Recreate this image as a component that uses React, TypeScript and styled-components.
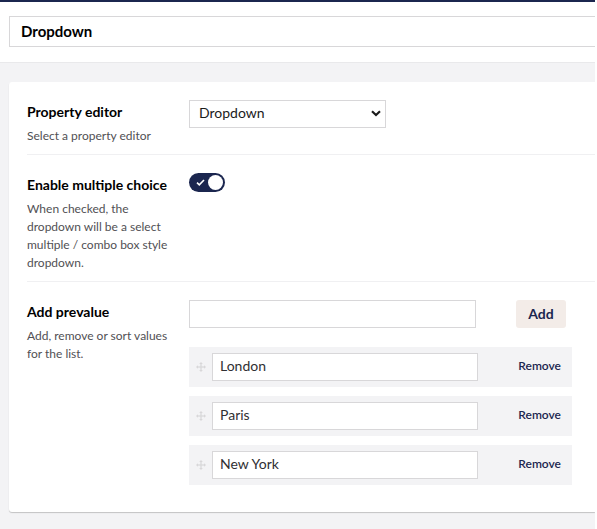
import React from "react";
import styled, { createGlobalStyle } from "styled-components";

const Global = createGlobalStyle`
  html, body { margin: 0; padding: 0; background: #fff; }
  body { font-family: Lato, "Open Sans", sans-serif; color: #1b1b1b; }
  * { box-sizing: border-box; }
`;

const Page = styled.div`
  width: 595px;
  height: 529px;
  overflow: hidden;
  display: flex;
  flex-direction: column;
  border-top: 2px solid #1b264f;
`;

const Header = styled.div`
  background: #fff;
  padding: 14px 0 15px 9px;
  border-bottom: 1px solid #e9e9eb;
`;

const NameInput = styled.input`
  display: block;
  width: 100%;
  height: 31px;
  border: 1px solid #d8d7d9;
  border-right: none;
  padding: 0 11px 2px;
  font-family: Lato, sans-serif;
  font-size: 15px;
  font-weight: 700;
  color: #000;
  outline: none;
`;

const Body = styled.div`
  flex: 1;
  background: #f3f3f5;
  padding: 19px 0 0 9px;
`;

const Card = styled.div`
  background: #fff;
  border-radius: 3px 0 0 3px;
  box-shadow: 0 1px 1px rgba(0, 0, 0, 0.2);
  padding: 0 0 27px 18px;
`;

const Row = styled.div<{ $last?: boolean }>`
  display: grid;
  grid-template-columns: 144px 1fr;
  column-gap: 18px;
  padding: ${(p) => (p.$last ? "18px 0 0 0" : "18px 0 9px 0")};
  border-bottom: ${(p) => (p.$last ? "none" : "1px solid #f0f0f2")};
`;

const LabelCol = styled.div`
  padding-top: 2px;
`;

const Label = styled.div`
  font-size: 14px;
  font-weight: 700;
  line-height: 20px;
  color: #000;
`;

const Desc = styled.div`
  margin-top: 5px;
  font-size: 12px;
  line-height: 18px;
  color: #515054;
`;

const SelectWrap = styled.div`
  position: relative;
  width: 197px;
  height: 28px;
`;

const Select = styled.select`
  appearance: none;
  width: 100%;
  height: 100%;
  border: 1px solid #d8d7d9;
  background: #fff;
  padding: 0 9px 3px;
  font-family: Lato, sans-serif;
  font-size: 14px;
  color: #1b1b1b;
  outline: none;
`;

const Chevron = styled.svg`
  position: absolute;
  right: 5px;
  top: 10px;
  pointer-events: none;
`;

const Toggle = styled.div`
  width: 36px;
  height: 19px;
  border-radius: 10px;
  background: #1b264f;
  display: flex;
  align-items: center;
  justify-content: space-between;
  padding: 0 2px 0 7px;
`;

const Knob = styled.span`
  width: 15px;
  height: 15px;
  border-radius: 50%;
  background: #fff;
`;

const Controls = styled.div`
  display: flex;
  flex-direction: column;
`;

const AddLine = styled.div`
  display: flex;
  align-items: center;
  gap: 40px;
`;

const TextInput = styled.input<{ $w: number }>`
  width: ${(p) => p.$w}px;
  height: 28px;
  border: 1px solid #d8d7d9;
  background: #fff;
  padding: 0 7px 4px;
  font-family: Lato, sans-serif;
  font-size: 14px;
  color: #303033;
  outline: none;
`;

const AddButton = styled.button`
  width: 50px;
  height: 28px;
  border: none;
  border-radius: 3px;
  background: #f3ece8;
  font-family: Lato, sans-serif;
  font-size: 14px;
  font-weight: 700;
  color: #1b264f;
  padding: 0 0 1px;
`;

const List = styled.div`
  margin-top: 19px;
  width: 383px;
  display: flex;
  flex-direction: column;
  gap: 9px;
`;

const Item = styled.div`
  height: 40px;
  background: #f3f3f5;
  display: flex;
  align-items: center;
  padding: 0 11px 0 7px;
`;

const Handle = styled.svg`
  flex: none;
  margin-right: 6px;
`;

const RemoveBtn = styled.button`
  margin-left: auto;
  border: none;
  background: none;
  padding: 0 0 3px;
  font-family: Lato, sans-serif;
  font-size: 12px;
  font-weight: 600;
  color: #1b264f;
`;

const DragIcon = () => (
  <Handle width="10" height="10" viewBox="0 0 10 10">
    <g fill="#d8d7d9">
      <rect x="4.4" y="1.5" width="1.2" height="7" />
      <rect x="1.5" y="4.4" width="7" height="1.2" />
      <path d="M5 0 L6.8 2 H3.2 Z" />
      <path d="M5 10 L6.8 8 H3.2 Z" />
      <path d="M0 5 L2 3.2 V6.8 Z" />
      <path d="M10 5 L8 3.2 V6.8 Z" />
    </g>
  </Handle>
);

const items = ["London", "Paris", "New York"];

export default function App() {
  return (
    <>
      <Global />
      <Page>
        <Header>
          <NameInput defaultValue="Dropdown" />
        </Header>
        <Body>
          <Card>
            <Row>
              <LabelCol>
                <Label>Property editor</Label>
                <Desc>Select a property editor</Desc>
              </LabelCol>
              <div>
                <SelectWrap>
                  <Select defaultValue="Dropdown">
                    <option>Dropdown</option>
                  </Select>
                  <Chevron width="10" height="7" viewBox="0 0 10 7">
                    <path d="M1 1.2 L5 5 L9 1.2" fill="none" stroke="#1b1b1b" strokeWidth="2.2" />
                  </Chevron>
                </SelectWrap>
              </div>
            </Row>
            <Row>
              <LabelCol>
                <Label>Enable multiple choice</Label>
                <Desc>When checked, the dropdown will be a select multiple / combo box style dropdown.</Desc>
              </LabelCol>
              <div>
                <Toggle>
                  <svg width="9" height="7" viewBox="0 0 9 7">
                    <path d="M1 3.6 L3.3 5.8 L8 1" fill="none" stroke="#fff" strokeWidth="1.6" />
                  </svg>
                  <Knob />
                </Toggle>
              </div>
            </Row>
            <Row $last>
              <LabelCol>
                <Label>Add prevalue</Label>
                <Desc>Add, remove or sort values for the list.</Desc>
              </LabelCol>
              <Controls>
                <AddLine>
                  <TextInput $w={287} />
                  <AddButton>Add</AddButton>
                </AddLine>
                <List>
                  {items.map((it) => (
                    <Item key={it}>
                      <DragIcon />
                      <TextInput $w={266} defaultValue={it} />
                      <RemoveBtn>Remove</RemoveBtn>
                    </Item>
                  ))}
                </List>
              </Controls>
            </Row>
          </Card>
        </Body>
      </Page>
    </>
  );
}
